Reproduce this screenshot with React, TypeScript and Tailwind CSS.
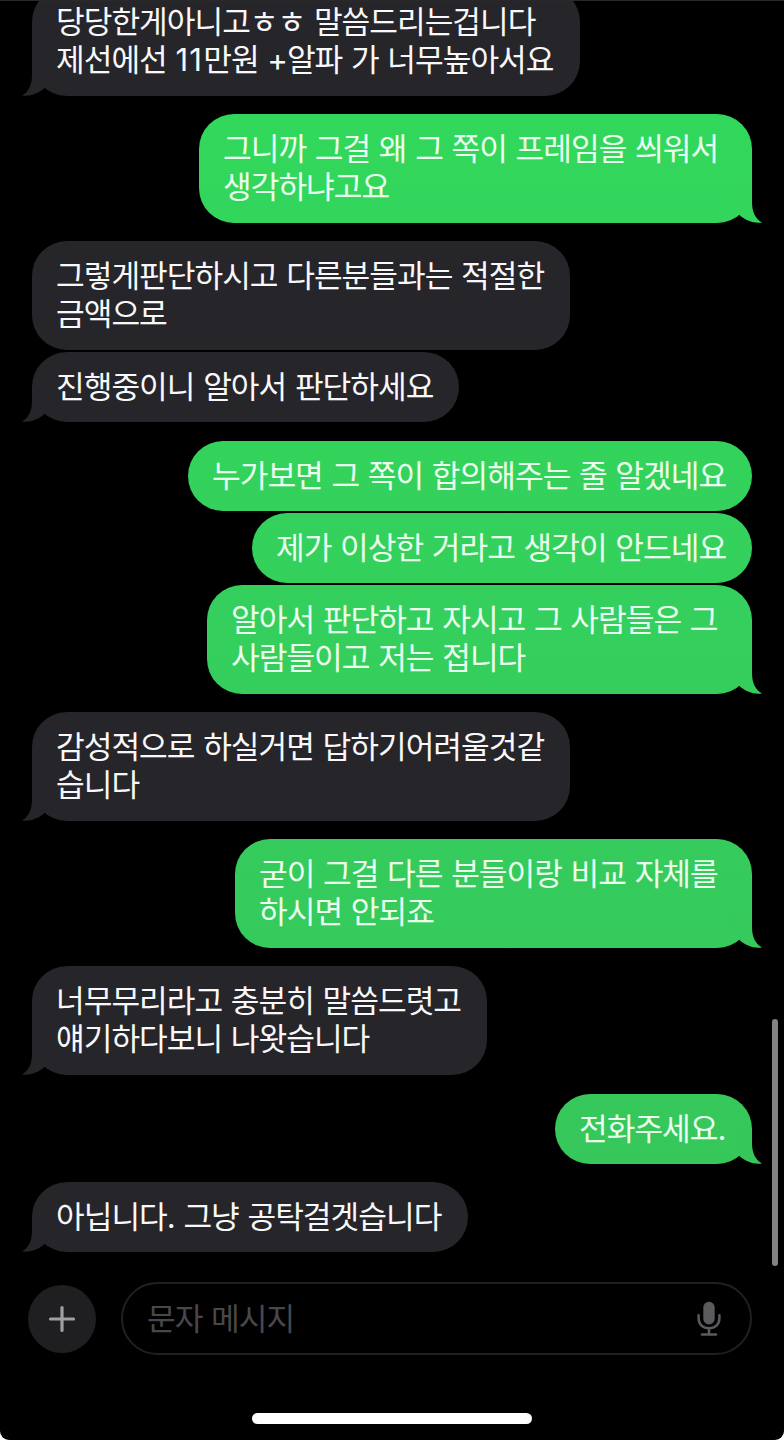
import { Fragment } from 'react';

type Message = {
  from: 'them' | 'me';
  lines: string[];
  box: string;
  tail?: string;
};

const messages: Message[] = [
  { from: 'them', lines: ['당당한게아니고ㅎㅎ 말씀드리는겁니다', '제선에선 11만원 +알파 가 너무높아서요'], box: 'w-[548px] h-[109px] bg-[#26252a]', tail: 'text-[#26252a]' },
  { from: 'me', lines: ['그니까 그걸 왜 그 쪽이 프레임을 씌워서', '생각하냐고요'], box: 'mt-[18px] w-[553px] h-[109px] bg-linear-to-b from-[#31d85b] to-[#33d55b]', tail: 'text-[#33d55b]' },
  { from: 'them', lines: ['그렇게판단하시고 다른분들과는 적절한', '금액으로'], box: 'mt-[18px] w-[538px] h-[109px] bg-[#26252a]' },
  { from: 'them', lines: ['진행중이니 알아서 판단하세요'], box: 'mt-[2px] w-[427px] h-[70px] bg-[#26252a]', tail: 'text-[#26252a]' },
  { from: 'me', lines: ['누가보면 그 쪽이 합의해주는 줄 알겠네요'], box: 'mt-[19px] w-[564px] h-[70px] bg-linear-to-b from-[#32d35b] to-[#34d15c]' },
  { from: 'me', lines: ['제가 이상한 거라고 생각이 안드네요'], box: 'mt-[2px] w-[500px] h-[70px] bg-linear-to-b from-[#34d15c] to-[#34d05c]' },
  { from: 'me', lines: ['알아서 판단하고 자시고 그 사람들은 그', '사람들이고 저는 접니다'], box: 'mt-[2px] w-[545px] h-[109px] bg-linear-to-b from-[#34d05c] to-[#35ce5c]', tail: 'text-[#35ce5c]' },
  { from: 'them', lines: ['감성적으로 하실거면 답하기어려울것같', '습니다'], box: 'mt-[18px] w-[538px] h-[109px] bg-[#26252a]', tail: 'text-[#26252a]' },
  { from: 'me', lines: ['굳이 그걸 다른 분들이랑 비교 자체를', '하시면 안되죠'], box: 'mt-[18px] w-[517px] h-[109px] bg-linear-to-b from-[#35cc5c] to-[#36ca5c]', tail: 'text-[#36ca5c]' },
  { from: 'them', lines: ['너무무리라고 충분히 말씀드렷고', '얘기하다보니 나왓습니다'], box: 'mt-[18px] w-[455px] h-[109px] bg-[#26252a]', tail: 'text-[#26252a]' },
  { from: 'me', lines: ['전화주세요.'], box: 'mt-[19px] w-[197px] h-[70px] bg-linear-to-b from-[#36c85b] to-[#36c75b]', tail: 'text-[#36c75b]' },
  { from: 'them', lines: ['아닙니다. 그냥 공탁걸겟습니다'], box: 'mt-[18px] w-[436px] h-[70px] bg-[#26252a]', tail: 'text-[#26252a]' },
];

function Tail({ mine, color }: { mine: boolean; color: string }) {
  return (
    <svg
      width="34"
      height="36"
      viewBox="0 0 34 36"
      className={`absolute bottom-0 ${mine ? 'right-[-10px] -scale-x-100' : 'left-[-10px]'} ${color}`}
      aria-hidden="true"
    >
      <path d="M10 0V15C10 25 6.5 32 0 35.4C7 36.8 16.5 34 23 27.6L30 0Z" fill="currentColor" />
    </svg>
  );
}

/* Digits are set a little wider than the surrounding Hangul. */
function Line({ text }: { text: string }) {
  return (
    <p className="relative whitespace-nowrap">
      {text.split(/(\d+)/).map((part, i) =>
        /^\d+$/.test(part) ? (
          <span key={i} className="tracking-[1.2px]">{part}</span>
        ) : (
          <Fragment key={i}>{part}</Fragment>
        ),
      )}
    </p>
  );
}

function Bubble({ message }: { message: Message }) {
  const mine = message.from === 'me';
  return (
    <div
      className={`relative shrink-0 rounded-[35px] pt-[16px] pl-[24px] ${message.box} ${mine ? 'self-end text-[#eaffee]' : 'self-start text-[#f8f8fa]'}`}
    >
      {message.tail && <Tail mine={mine} color={message.tail} />}
      {message.lines.map((line) => (
        <Line key={line} text={line} />
      ))}
    </div>
  );
}

export default function App() {
  return (
    <div className="h-[1440px] w-[784px] overflow-hidden bg-white">
      <div className="relative flex h-full flex-col overflow-hidden rounded-b-[9px] bg-black font-['Inter','Noto_Sans_CJK_KR',sans-serif] text-[31.2px] leading-[38px] tracking-[-1px] [word-spacing:0.9px]">
        <main className="-mt-[13px] flex h-[1265px] shrink-0 flex-col px-[32px]">
          {messages.map((m, i) => (
            <Bubble key={i} message={m} />
          ))}
        </main>

        <div className="absolute top-0 left-0 h-px w-full bg-[#29292b]" />
        <div className="absolute top-[1019px] right-[6px] h-[247px] w-[6px] rounded-full bg-[#838383]" />

        <footer className="mt-[30px] flex h-[73px] shrink-0 items-center pr-[32px] pl-[28px]">
          <button className="flex size-[68px] items-center justify-center rounded-full bg-[#1f1f21]" aria-label="추가">
            <svg width="28" height="28" viewBox="0 0 28 28" fill="none" stroke="#a0a0a2" strokeWidth="3.2" strokeLinecap="round">
              <path d="M14 2.5V25.5M2.5 14H25.5" />
            </svg>
          </button>
          <div className="ml-[25px] flex h-[73px] flex-1 items-center justify-between rounded-full border-2 border-[#202022] pr-[29px] pl-[24px] text-[#48484a]">
            <span className="whitespace-nowrap">문자 메시지</span>
            <svg width="24" height="36" viewBox="0 0 24 36" fill="none" stroke="#5b5b5d" strokeWidth="2.5" strokeLinecap="round">
              <rect x="6.3" y="0.8" width="11.4" height="22.6" rx="5.7" fill="#5b5b5d" stroke="none" />
              <path d="M1.6 14.2V17.2C1.6 23.4 6 27.3 12 27.3S22.4 23.4 22.4 17.2V14.2M12 27.3V33.5M5 33.5H19" />
            </svg>
          </div>
        </footer>
        <div className="mt-[58px] h-[11px] w-[280px] shrink-0 self-center rounded-full bg-white" />
      </div>
    </div>
  );
}
